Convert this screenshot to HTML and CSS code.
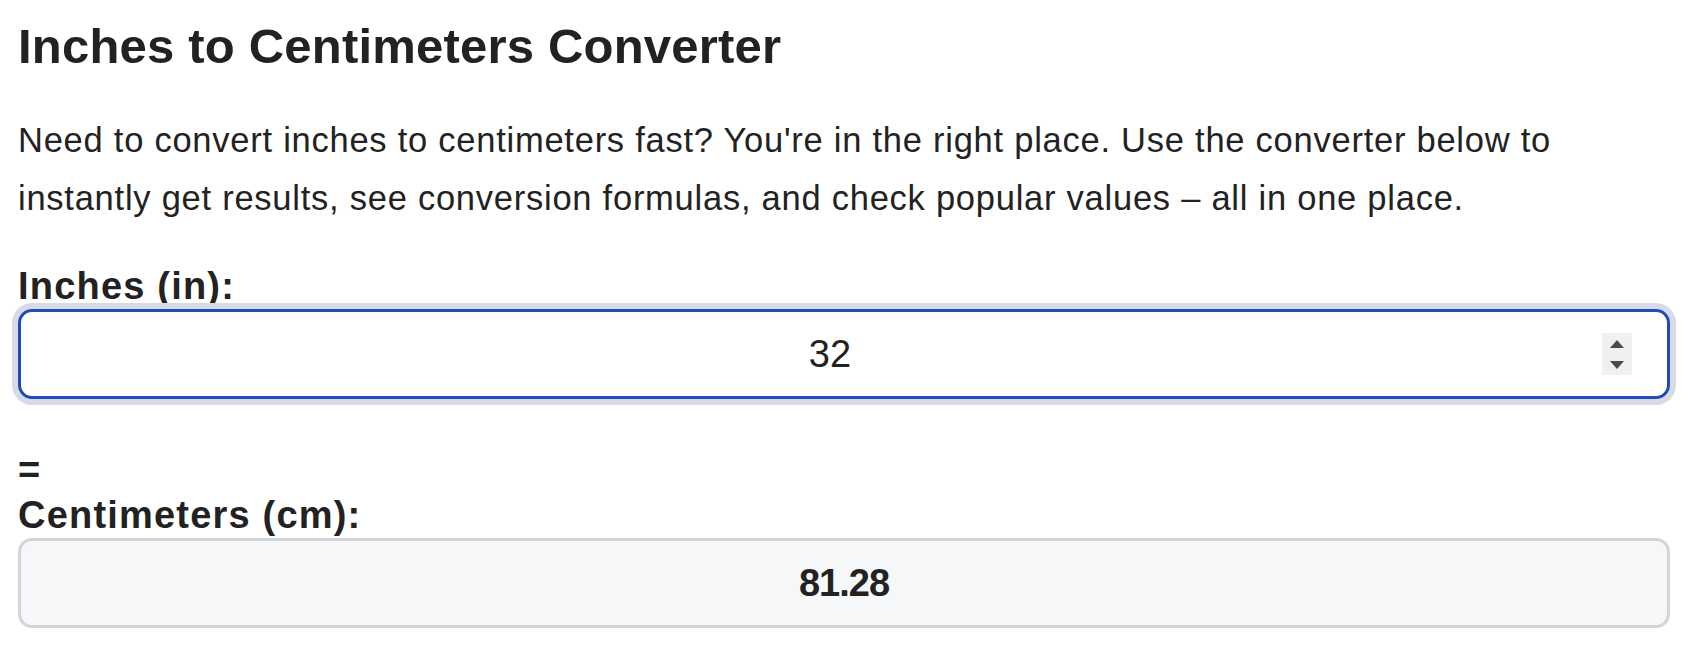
FILE: index.html
```html
<!DOCTYPE html>
<html lang="en">
<head>
    <meta charset="UTF-8">
    <meta name="viewport" content="width=device-width, initial-scale=1.0">
    <title>Inches to Centimeters Converter</title>
    <link rel="stylesheet" href="styles.css">
</head>
<body>
    <div class="converter">
        <h1>Inches to Centimeters Converter</h1>
        <p class="intro">Need to convert inches to centimeters fast? You're in the right place. Use the converter below to instantly get results, see conversion formulas, and check popular values – all in one place.</p>

        <label class="field-label" for="inches">Inches (in):</label>
        <div class="field field-input">
            <input type="number" id="inches" value="32">
            <span class="spinner">
                <svg width="14" height="8" viewBox="0 0 14 8"><path d="M7 0 L14 8 L0 8 Z" fill="#4b4b4b"/></svg>
                <svg width="14" height="8" viewBox="0 0 14 8"><path d="M0 0 L14 0 L7 8 Z" fill="#4b4b4b"/></svg>
            </span>
        </div>

        <div class="equals">=</div>

        <label class="field-label" for="centimeters">Centimeters (cm):</label>
        <div class="field field-output" id="centimeters">81.28</div>
    </div>

    <script>
        const inchesEl = document.getElementById('inches');
        const cmEl = document.getElementById('centimeters');

        // Update result when the value changes
        inchesEl.addEventListener('input', () => {
            const value = parseFloat(inchesEl.value);
            cmEl.textContent = isNaN(value) ? '' : (value * 2.54).toFixed(2);
        });
    </script>
</body>
</html>
```

FILE: styles.css
```css
body {
    font-family: 'Liberation Sans', Arial, sans-serif;
    margin: 0;
    padding: 0 36px 0 18px;
    color: #222;
    background: #fff;
}
.converter {
    display: flex;
    flex-direction: column;
}
h1 {
    font-size: 49px;
    font-weight: bold;
    line-height: 59px;
    letter-spacing: 0.2px;
    margin: 17px 0 0;
}
.intro {
    font-size: 34.5px;
    line-height: 57.5px;
    letter-spacing: 0.75px;
    margin: 36px 0 0;
}
.field-label {
    display: block;
    font-size: 38px;
    font-weight: bold;
    line-height: 45px;
    letter-spacing: 1.2px;
    margin-top: 37px;
}
.field {
    height: 90px;
    box-sizing: border-box;
    border-radius: 14px;
    border: 3px solid #d3d5db;
    display: flex;
    align-items: center;
}
.field-input {
    border-color: #1e4db5;
    box-shadow: 0 0 0 6px #d8dbe7;
    padding-right: 35px;
}
.field-input input {
    flex: 1;
    min-width: 0;
    border: none;
    outline: none;
    background: transparent;
    font-family: inherit;
    font-size: 38px;
    color: #222;
    text-align: center;
    padding: 0 0 0 37px;
    -moz-appearance: textfield;
}
.field-input input::-webkit-inner-spin-button,
.field-input input::-webkit-outer-spin-button {
    -webkit-appearance: none;
    margin: 0;
}
.spinner {
    width: 30px;
    height: 42px;
    background: #f0f0f0;
    display: flex;
    flex-direction: column;
    align-items: center;
    justify-content: center;
    gap: 13px;
}
.spinner svg {
    display: block;
}
.equals {
    font-size: 38px;
    font-weight: bold;
    line-height: 45px;
    margin-top: 49px;
}
.equals + .field-label {
    margin-top: 0;
}
.field-output {
    background: #f6f7f9;
    justify-content: center;
    font-size: 38px;
    font-weight: bold;
    letter-spacing: -1px;
}
```
